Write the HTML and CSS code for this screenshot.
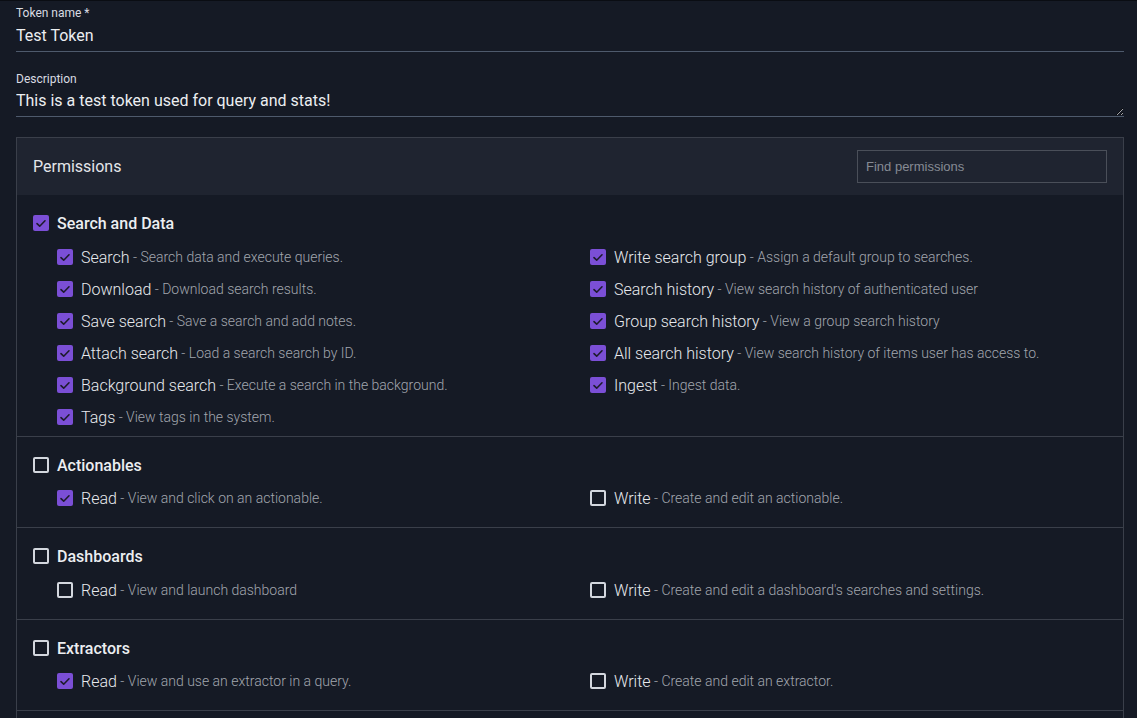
FILE: index.html
```html
<!DOCTYPE html>
<html lang="en">
<head>
<meta charset="utf-8">
<title>Token</title>
<link rel="stylesheet" href="styles.css">
</head>
<body>
<div class="page">
  <div class="field">
    <label class="field-label" for="tname">Token name *</label>
    <input id="tname" class="field-input" type="text" value="Test Token">
  </div>
  <div class="field field--desc">
    <label class="field-label" for="tdesc">Description</label>
    <textarea id="tdesc" class="field-textarea" rows="1">This is a test token used for query and stats!</textarea>
  </div>

  <div class="panel">
    <div class="panel-header">
      <span class="panel-title">Permissions</span>
      <input class="panel-search" type="text" placeholder="Find permissions">
    </div>

    <div class="section section--first">
      <div class="section-head"><span class="cb cb--on"><svg viewBox="0 0 16 16"><polyline points="4,8.6 6.7,11.2 12,5.8"/></svg></span><span class="section-title">Search and Data</span></div>
      <div class="grid">
        <div class="col">
          <div class="item"><span class="cb cb--on"><svg viewBox="0 0 16 16"><polyline points="4,8.6 6.7,11.2 12,5.8"/></svg></span><span class="item-name">Search</span><span class="item-desc">&nbsp;- Search data and execute queries.</span></div>
          <div class="item"><span class="cb cb--on"><svg viewBox="0 0 16 16"><polyline points="4,8.6 6.7,11.2 12,5.8"/></svg></span><span class="item-name">Download</span><span class="item-desc">&nbsp;- Download search results.</span></div>
          <div class="item"><span class="cb cb--on"><svg viewBox="0 0 16 16"><polyline points="4,8.6 6.7,11.2 12,5.8"/></svg></span><span class="item-name">Save search</span><span class="item-desc">&nbsp;- Save a search and add notes.</span></div>
          <div class="item"><span class="cb cb--on"><svg viewBox="0 0 16 16"><polyline points="4,8.6 6.7,11.2 12,5.8"/></svg></span><span class="item-name">Attach search</span><span class="item-desc">&nbsp;- Load a search search by ID.</span></div>
          <div class="item"><span class="cb cb--on"><svg viewBox="0 0 16 16"><polyline points="4,8.6 6.7,11.2 12,5.8"/></svg></span><span class="item-name">Background search</span><span class="item-desc">&nbsp;- Execute a search in the background.</span></div>
          <div class="item"><span class="cb cb--on"><svg viewBox="0 0 16 16"><polyline points="4,8.6 6.7,11.2 12,5.8"/></svg></span><span class="item-name">Tags</span><span class="item-desc">&nbsp;- View tags in the system.</span></div>
        </div>
        <div class="col">
          <div class="item"><span class="cb cb--on"><svg viewBox="0 0 16 16"><polyline points="4,8.6 6.7,11.2 12,5.8"/></svg></span><span class="item-name">Write search group</span><span class="item-desc">&nbsp;- Assign a default group to searches.</span></div>
          <div class="item"><span class="cb cb--on"><svg viewBox="0 0 16 16"><polyline points="4,8.6 6.7,11.2 12,5.8"/></svg></span><span class="item-name">Search history</span><span class="item-desc">&nbsp;- View search history of authenticated user</span></div>
          <div class="item"><span class="cb cb--on"><svg viewBox="0 0 16 16"><polyline points="4,8.6 6.7,11.2 12,5.8"/></svg></span><span class="item-name">Group search history</span><span class="item-desc">&nbsp;- View a group search history</span></div>
          <div class="item"><span class="cb cb--on"><svg viewBox="0 0 16 16"><polyline points="4,8.6 6.7,11.2 12,5.8"/></svg></span><span class="item-name">All search history</span><span class="item-desc">&nbsp;- View search history of items user has access to.</span></div>
          <div class="item"><span class="cb cb--on"><svg viewBox="0 0 16 16"><polyline points="4,8.6 6.7,11.2 12,5.8"/></svg></span><span class="item-name">Ingest</span><span class="item-desc">&nbsp;- Ingest data.</span></div>
        </div>
      </div>
    </div>

    <div class="section">
      <div class="section-head"><span class="cb"></span><span class="section-title">Actionables</span></div>
      <div class="grid">
        <div class="col">
          <div class="item"><span class="cb cb--on"><svg viewBox="0 0 16 16"><polyline points="4,8.6 6.7,11.2 12,5.8"/></svg></span><span class="item-name">Read</span><span class="item-desc">&nbsp;- View and click on an actionable.</span></div>
        </div>
        <div class="col">
          <div class="item"><span class="cb"></span><span class="item-name">Write</span><span class="item-desc">&nbsp;- Create and edit an actionable.</span></div>
        </div>
      </div>
    </div>

    <div class="section section--tall">
      <div class="section-head"><span class="cb"></span><span class="section-title">Dashboards</span></div>
      <div class="grid">
        <div class="col">
          <div class="item"><span class="cb"></span><span class="item-name">Read</span><span class="item-desc">&nbsp;- View and launch dashboard</span></div>
        </div>
        <div class="col">
          <div class="item"><span class="cb"></span><span class="item-name">Write</span><span class="item-desc">&nbsp;- Create and edit a dashboard's searches and settings.</span></div>
        </div>
      </div>
    </div>

    <div class="section">
      <div class="section-head"><span class="cb"></span><span class="section-title">Extractors</span></div>
      <div class="grid">
        <div class="col">
          <div class="item"><span class="cb cb--on"><svg viewBox="0 0 16 16"><polyline points="4,8.6 6.7,11.2 12,5.8"/></svg></span><span class="item-name">Read</span><span class="item-desc">&nbsp;- View and use an extractor in a query.</span></div>
        </div>
        <div class="col">
          <div class="item"><span class="cb"></span><span class="item-name">Write</span><span class="item-desc">&nbsp;- Create and edit an extractor.</span></div>
        </div>
      </div>
    </div>

    <div class="section section--rest"></div>
  </div>
</div>
</body>
</html>
```

FILE: styles.css
```css
* { box-sizing: border-box; }

html, body {
  margin: 0;
  padding: 0;
  background: #151a25;
}

body {
  font-family: Roboto, "Noto Sans", sans-serif;
  color: #e6e8ec;
  border-top: 1px solid #0a0d13;
}

.page {
  padding: 4px 13px 0 16px;
}

.field {
  display: flex;
  flex-direction: column;
}

.field--desc {
  margin-top: 19px;
}

.field-label {
  font-size: 12px;
  line-height: 16px;
  color: #d9dce2;
  height: 16px;
}

.field-input {
  height: 30px;
  margin-top: 1px;
  padding: 0 0 2px 0;
  border: 0;
  border-bottom: 1px solid #4e5a6c;
  background: transparent;
  color: #eceef1;
  font-family: Roboto, sans-serif;
  font-size: 16px;
  outline: none;
}

.field-textarea {
  display: block;
  height: 29px;
  margin-top: 1px;
  padding: 3px 0 5px 0;
  border: 0;
  border-bottom: 1px solid #4e5a6c;
  background: transparent;
  color: #eceef1;
  font-family: Roboto, sans-serif;
  font-size: 16px;
  line-height: 20px;
  outline: none;
  resize: vertical;
  overflow: hidden;
  color-scheme: dark;
}

.panel {
  margin-top: 20px;
  border: 1px solid #3a3f4a;
  border-bottom: 0;
}

.panel-header {
  height: 57px;
  display: flex;
  align-items: center;
  justify-content: space-between;
  padding: 0 16px;
  background: #1f2430;
}

.panel-title {
  font-size: 16px;
  color: #e4e6ea;
}

.panel-search {
  width: 250px;
  height: 33px;
  padding: 0 8px;
  border: 1px solid #4a4f59;
  background: #1f2430;
  color: #e4e6ea;
  font-family: "Liberation Sans", Arial, sans-serif;
  font-size: 13px;
  outline: none;
}

.panel-search::placeholder {
  color: #868b94;
}

.section {
  padding: 16px 0 13px 16px;
  border-bottom: 1px solid #3a3f4a;
}

.section--first {
  padding-bottom: 3px;
}

.section--first .grid,
.section--tall .grid {
  margin-top: 6px;
}

.section--tall {
  padding-bottom: 13px;
}

.section--rest {
  height: 60px;
  border-bottom: 0;
}

.section-head {
  display: flex;
  align-items: center;
  gap: 8px;
  height: 24px;
}

.section-title {
  font-size: 16px;
  font-weight: 500;
  color: #eceef1;
}

.grid {
  display: grid;
  grid-template-columns: 1fr 1fr;
  padding-left: 24px;
  margin-top: 5px;
}

.col {
  display: flex;
  flex-direction: column;
}

.item {
  display: flex;
  align-items: center;
  height: 32px;
  white-space: nowrap;
}

.item .cb {
  margin-right: 8px;
}

.item-name {
  font-size: 16px;
  font-weight: 300;
  color: #e8eaee;
}

.item-desc {
  font-size: 14px;
  font-weight: 300;
  color: #a2a6ae;
}

.cb {
  flex: none;
  width: 16px;
  height: 16px;
  border: 2px solid #d3d7de;
  border-radius: 2px;
  display: inline-flex;
  align-items: center;
  justify-content: center;
}

.cb--on {
  border: 0;
  background: #7b4fd6;
}

.cb svg {
  width: 16px;
  height: 16px;
  fill: none;
  stroke: #1d1b2c;
  stroke-width: 1.6;
  stroke-linecap: round;
  stroke-linejoin: round;
}
```
